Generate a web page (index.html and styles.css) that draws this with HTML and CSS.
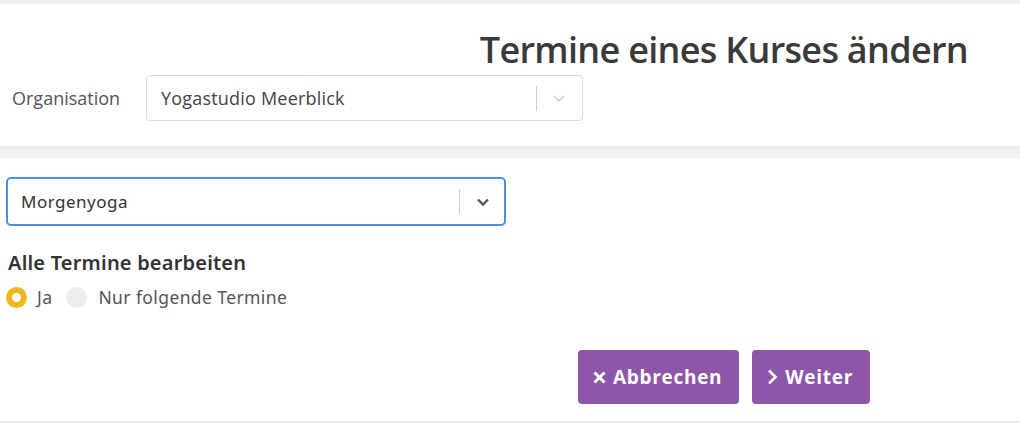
FILE: index.html
```html
<!DOCTYPE html>
<html lang="de">
<head>
<meta charset="UTF-8">
<meta name="viewport" content="width=device-width, initial-scale=1.0">
<title>Termine eines Kurses ändern</title>
<link rel="stylesheet" href="styles.css">
</head>
<body>

<div class="topbar"></div>

<header class="header">
  <h1 class="title">Termine eines Kurses ändern</h1>
  <div class="org-row">
    <label class="org-label">Organisation</label>
    <div class="select org-select">
      <span class="select-value">Yogastudio Meerblick</span>
      <span class="select-sep"></span>
      <svg class="chevron light" width="14" height="14" viewBox="0 0 14 14"><path d="M2 5l5 5 5-5" fill="none" stroke="#ccc" stroke-width="1.4"/></svg>
    </div>
  </div>
</header>

<div class="divider"></div>

<main class="content">
  <div class="select course-select">
    <span class="select-value">Morgenyoga</span>
    <span class="select-sep"></span>
    <svg class="chevron" width="16" height="16" viewBox="0 0 16 16"><path d="M3 5.5l5 5 5-5" fill="none" stroke="#555" stroke-width="2.4"/></svg>
  </div>

  <h2 class="section-title">Alle Termine bearbeiten</h2>
  <div class="radios">
    <span class="radio checked"></span>
    <span class="radio-label">Ja</span>
    <span class="radio"></span>
    <span class="radio-label">Nur folgende Termine</span>
  </div>

  <div class="actions">
    <button class="btn">
      <svg width="13" height="13" viewBox="0 0 13 13"><path d="M1.5 1.5l10 10M11.5 1.5l-10 10" stroke="#fff" stroke-width="3"/></svg>
      Abbrechen
    </button>
    <button class="btn">
      <svg width="11" height="16" viewBox="0 0 11 16"><path d="M2 1.5l6.5 6.5-6.5 6.5" fill="none" stroke="#fff" stroke-width="2.6"/></svg>
      Weiter
    </button>
  </div>
</main>

<div class="bottom-line"></div>

</body>
</html>
```

FILE: styles.css
```css
body {
  margin: 0;
  background-color: #fff;
  font-family: "Open Sans", Arial, sans-serif;
  color: #444;
}
.topbar {
  height: 4px;
  background-color: #f1f1f3;
}
.header {
  height: 142px;
}
.title {
  margin: 0;
  padding: 22px 52px 0 0;
  text-align: right;
  font-size: 36px;
  font-weight: 600;
  letter-spacing: -0.7px;
  color: #3a3a3a;
  line-height: 48px;
}
.org-row {
  display: flex;
  align-items: center;
  margin-top: 1px;
}
.org-label {
  width: 146px;
  padding-left: 12px;
  box-sizing: border-box;
  font-size: 18px;
  color: #555;
  letter-spacing: 0;
}
.select {
  display: flex;
  align-items: center;
  box-sizing: border-box;
  background-color: #fff;
}
.org-select {
  width: 437px;
  height: 46px;
  border: 1px solid #dcdcdc;
  border-radius: 4px;
  padding-left: 14px;
}
.select-value {
  flex: 1;
  font-size: 18px;
  color: #444;
  letter-spacing: 0.2px;
}
.select-sep {
  width: 1px;
  height: 25px;
  background-color: #ccc;
}
.chevron {
  margin: 0 16px 0 15px;
}
.divider {
  height: 12px;
  background: linear-gradient(#e8e8ea, #f1f1f3 40%, #f3f3f5);
}
.content {
  padding: 19px 6px 0;
  height: 263px;
  box-sizing: border-box;
  font-family: "Noto Sans", "Open Sans", sans-serif;
}
.course-select {
  width: 500px;
  height: 49px;
  border: 2px solid #4a8fe7;
  border-radius: 5px;
  padding-left: 13px;
}
.course-select .select-value {
  font-size: 17px;
  color: #333;
  letter-spacing: 0.5px;
}
.course-select .chevron {
  margin: 0 13px 0 15px;
}
.section-title {
  margin: 23px 0 0 2px;
  font-size: 20px;
  font-weight: 600;
  color: #333;
  letter-spacing: 0.2px;
}
.radios {
  display: flex;
  align-items: center;
  margin-top: 9px;
}
.radio {
  width: 21px;
  height: 21px;
  border-radius: 50%;
  background-color: #ededef;
  box-sizing: border-box;
}
.radio.checked {
  border: 6px solid #f0b820;
  box-shadow: inset 0 0 0 5px #fff;
  background-color: #fff;
}
.radio-label {
  margin: 0 14px 0 10px;
  font-size: 17.5px;
  color: #555;
  letter-spacing: 0.4px;
}
.radio-label:last-child {
  margin-left: 11px;
}
.actions {
  display: flex;
  gap: 13px;
  margin: 41px 0 0 572px;
}
.btn {
  display: flex;
  align-items: center;
  gap: 7px;
  height: 54px;
  padding: 0 17px 0 15px;
  border: none;
  border-radius: 4px;
  background-color: #8e56a9;
  color: #fff;
  font-family: "Open Sans", sans-serif;
  font-size: 19px;
  font-weight: 700;
  letter-spacing: 0.7px;
}
.bottom-line {
  height: 2px;
  background-color: #ececee;
}
```
